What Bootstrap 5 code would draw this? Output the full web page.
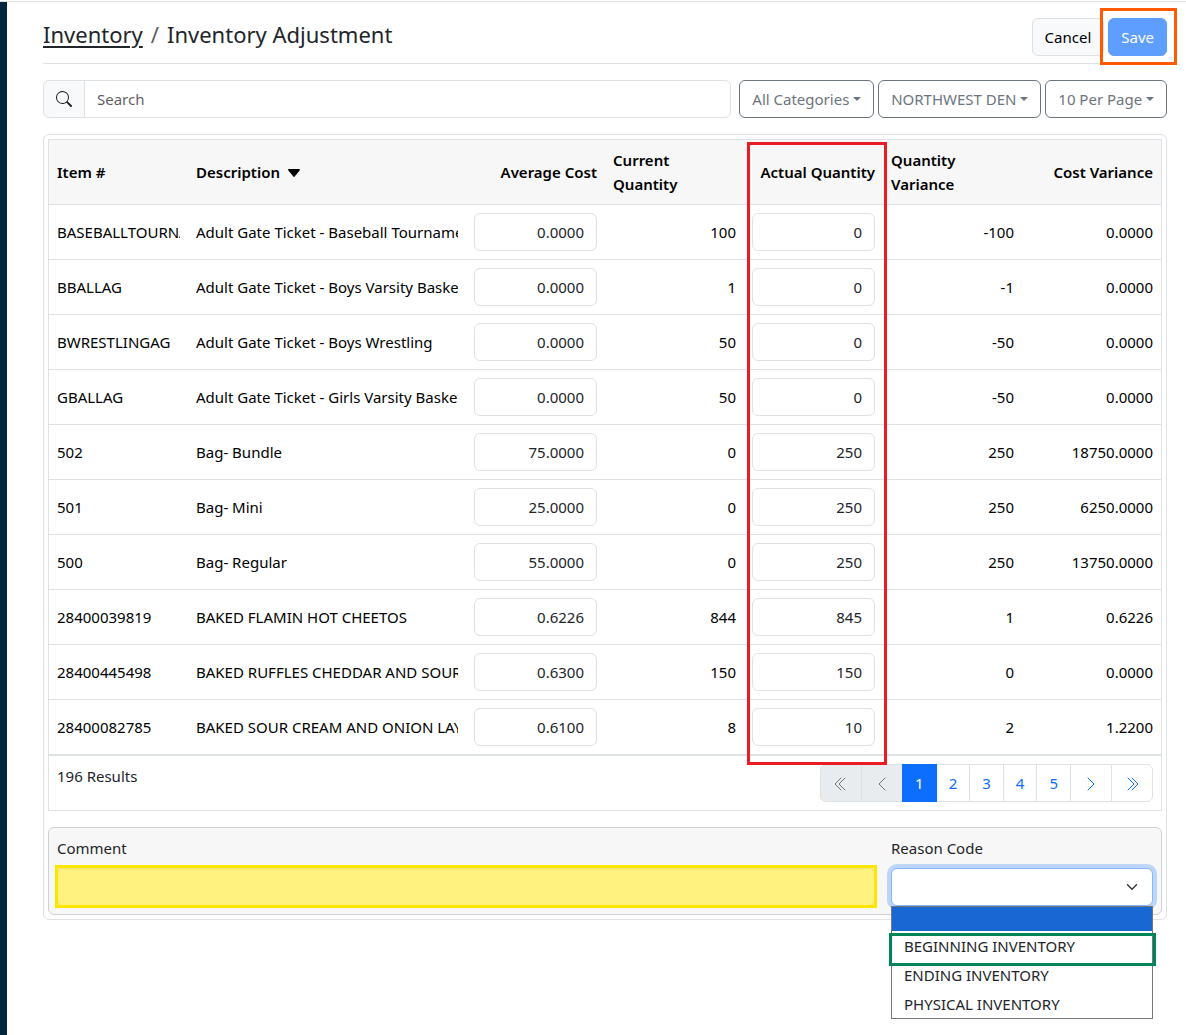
<!DOCTYPE html>
<html lang="en">
<head>
<meta charset="utf-8">
<meta name="viewport" content="width=device-width, initial-scale=1">
<title>Inventory Adjustment</title>
<link href="https://cdn.jsdelivr.net/npm/bootstrap@5.3.0/dist/css/bootstrap.min.css" rel="stylesheet">
<style>
  body { font-family: "Noto Sans", "Open Sans", sans-serif; font-size: 15px; line-height: 24px; }
  .btn, .form-control, .form-select, .input-group-text, .page-link { font-size: 15px; line-height: 24px; }
  .top-rule { height: 2px; border-bottom: 1px solid #dee2e6; }
  .side-strip { width: 7px; background: #002639; }
  .page-body { padding: 16px 19px 16px 36px; min-width: 0; }
  .title-bar { padding-bottom: 7px; }
  .crumbs { font-size: 22px; line-height: 32px; }
  .crumbs a { color: #212529; text-underline-offset: 3px; }
  .btn-cancel { --bs-btn-border-color: #dee2e6; }
  .btn-save { --bs-btn-disabled-bg: #5e9eff; --bs-btn-disabled-border-color: #5e9eff; --bs-btn-disabled-opacity: 1; }
  .form-control, .input-group-text { border-color: #dee2e6; }
  .search-addon { background: #f8f9fa; }
  .frame { padding: 4px; }
  .items { table-layout: fixed; color: #000; --bs-table-color: #000; }
  .items th { font-weight: 600; vertical-align: middle; background: #f7f7f7; }
  .items td { vertical-align: middle; }
  .pagination { --bs-pagination-padding-x: 12px; --bs-pagination-font-size: 15px; --bs-pagination-color: #0d6efd; --bs-pagination-disabled-color: #6c757d; --bs-pagination-disabled-bg: #e9ecef; }
  .adjust-panel { background: #f7f7f7; border: 1px solid #d0d1d2; border-radius: 6px; }
  /* callout frames laid over the controls they point at */
  .callout { position: absolute; pointer-events: none; z-index: 5; border: 3px solid; }
  .callout-save { inset: -10px -10px -9px -8px; border-color: #ff5a00; }
  .callout-column { left: calc(62.5% + 3px); width: calc(12.5% + 1px); top: 2px; bottom: 45px; border-color: #e81c22; }
  .callout-comment { inset: -3px -2px -2px -2px; border-color: #ffe600; background: rgba(255, 230, 0, .5); }
  .callout-option { inset: 1px -4px -5px -3px; border-color: #008558; }
  .reason-select, .reason-select:focus { border-color: #86b7fe; box-shadow: 0 0 0 4px rgba(13, 110, 253, .25); }
  .option-list { position: absolute; top: 38px; left: 0; right: 0; z-index: 3; background: #fff; border: 1px solid #767676; color: #212529; }
  .option-list li { position: relative; height: 29px; padding-left: 12px; line-height: 28px; }
  .option-list .picked { height: 25px; border-bottom: 1px solid #fff; background: #1967d2; background-clip: padding-box; }
  .option-list li:last-child { height: 28px; }
</style>
</head>
<body class="d-flex flex-column min-vh-100">
<div class="top-rule"></div>
<div class="d-flex flex-grow-1">
  <div class="side-strip flex-shrink-0"></div>
  <main class="page-body flex-grow-1">
    <header class="title-bar d-flex justify-content-between align-items-start border-bottom mb-3">
      <nav aria-label="breadcrumb">
        <ol class="breadcrumb crumbs mb-0">
          <li class="breadcrumb-item"><a href="#">Inventory</a></li>
          <li class="breadcrumb-item text-body" aria-current="page">Inventory Adjustment</li>
        </ol>
      </nav>
      <div class="d-flex gap-1">
        <button type="button" class="btn btn-light btn-cancel">Cancel</button>
        <div class="position-relative">
          <button type="button" class="btn btn-primary btn-save" disabled>Save</button>
          <div class="callout callout-save"></div>
        </div>
      </div>
    </header>

    <div class="d-flex gap-1 mb-3">
      <div class="input-group me-1 flex-grow-1 w-auto">
        <label class="input-group-text search-addon" for="search" aria-label="Search">
          <svg width="16" height="16" fill="currentColor" viewBox="0 0 16 16"><path d="M11.742 10.344a6.500 6.500 0 1 0-1.397 1.398h-.001c.030.040.062.078.098.115l3.850 3.850a1 1 0 0 0 1.415-1.414l-3.850-3.850a1.007 1.007 0 0 0-.115-.100zM12 6.500a5.500 5.500 0 1 1-11 0 5.500 5.500 0 0 1 11 0z"/></svg>
        </label>
        <input type="text" class="form-control" id="search" placeholder="Search">
      </div>
      <button type="button" class="btn btn-outline-secondary dropdown-toggle text-nowrap">All Categories</button>
      <button type="button" class="btn btn-outline-secondary dropdown-toggle text-nowrap">NORTHWEST DEN</button>
      <button type="button" class="btn btn-outline-secondary dropdown-toggle text-nowrap">10 Per Page</button>
    </div>

    <section class="frame border rounded">
      <div class="position-relative border mb-3">
        <table class="table items mb-0">
          <colgroup><col style="width:12.5%"><col style="width:25%"><col style="width:12.5%"><col style="width:12.5%"><col style="width:12.5%"><col style="width:12.5%"><col style="width:12.5%"></colgroup>
          <thead>
            <tr>
              <th scope="col">Item #</th>
              <th scope="col">Description <svg class="ms-1" width="12" height="10" viewBox="0 0 12 10"><path d="M.8 0h10.400c.7 0 1 .7.600 1.200L6.700 7.500a.9.900 0 0 1-1.400 0L.2 1.200C-.2.700.1 0 .8 0z"/></svg></th>
              <th scope="col" class="text-end text-nowrap">Average Cost</th>
              <th scope="col">Current Quantity</th>
              <th scope="col" class="text-end text-nowrap">Actual Quantity</th>
              <th scope="col">Quantity Variance</th>
              <th scope="col" class="text-end text-nowrap">Cost Variance</th>
            </tr>
          </thead>
          <tbody>
            <tr><td><span class="d-block overflow-hidden text-nowrap">BASEBALLTOURNAG</span></td><td><span class="d-block overflow-hidden text-nowrap">Adult Gate Ticket - Baseball Tournament</span></td><td><input class="form-control text-end" aria-label="Average cost" value="0.0000"></td><td class="text-end">100</td><td><input class="form-control text-end" aria-label="Actual quantity" value="0"></td><td class="text-end">-100</td><td class="text-end">0.0000</td></tr>
            <tr><td>BBALLAG</td><td><span class="d-block overflow-hidden text-nowrap">Adult Gate Ticket - Boys Varsity Basketball</span></td><td><input class="form-control text-end" aria-label="Average cost" value="0.0000"></td><td class="text-end">1</td><td><input class="form-control text-end" aria-label="Actual quantity" value="0"></td><td class="text-end">-1</td><td class="text-end">0.0000</td></tr>
            <tr><td>BWRESTLINGAG</td><td><span class="d-block overflow-hidden text-nowrap">Adult Gate Ticket - Boys Wrestling</span></td><td><input class="form-control text-end" aria-label="Average cost" value="0.0000"></td><td class="text-end">50</td><td><input class="form-control text-end" aria-label="Actual quantity" value="0"></td><td class="text-end">-50</td><td class="text-end">0.0000</td></tr>
            <tr><td>GBALLAG</td><td><span class="d-block overflow-hidden text-nowrap">Adult Gate Ticket - Girls Varsity Basketball</span></td><td><input class="form-control text-end" aria-label="Average cost" value="0.0000"></td><td class="text-end">50</td><td><input class="form-control text-end" aria-label="Actual quantity" value="0"></td><td class="text-end">-50</td><td class="text-end">0.0000</td></tr>
            <tr><td>502</td><td>Bag- Bundle</td><td><input class="form-control text-end" aria-label="Average cost" value="75.0000"></td><td class="text-end">0</td><td><input class="form-control text-end" aria-label="Actual quantity" value="250"></td><td class="text-end">250</td><td class="text-end">18750.0000</td></tr>
            <tr><td>501</td><td>Bag- Mini</td><td><input class="form-control text-end" aria-label="Average cost" value="25.0000"></td><td class="text-end">0</td><td><input class="form-control text-end" aria-label="Actual quantity" value="250"></td><td class="text-end">250</td><td class="text-end">6250.0000</td></tr>
            <tr><td>500</td><td>Bag- Regular</td><td><input class="form-control text-end" aria-label="Average cost" value="55.0000"></td><td class="text-end">0</td><td><input class="form-control text-end" aria-label="Actual quantity" value="250"></td><td class="text-end">250</td><td class="text-end">13750.0000</td></tr>
            <tr><td>28400039819</td><td><span class="d-block overflow-hidden text-nowrap">BAKED FLAMIN HOT CHEETOS</span></td><td><input class="form-control text-end" aria-label="Average cost" value="0.6226"></td><td class="text-end">844</td><td><input class="form-control text-end" aria-label="Actual quantity" value="845"></td><td class="text-end">1</td><td class="text-end">0.6226</td></tr>
            <tr><td>28400445498</td><td><span class="d-block overflow-hidden text-nowrap">BAKED RUFFLES CHEDDAR AND SOUR CREAM</span></td><td><input class="form-control text-end" aria-label="Average cost" value="0.6300"></td><td class="text-end">150</td><td><input class="form-control text-end" aria-label="Actual quantity" value="150"></td><td class="text-end">0</td><td class="text-end">0.0000</td></tr>
            <tr><td>28400082785</td><td><span class="d-block overflow-hidden text-nowrap">BAKED SOUR CREAM AND ONION LAYS</span></td><td><input class="form-control text-end" aria-label="Average cost" value="0.6100"></td><td class="text-end">8</td><td><input class="form-control text-end" aria-label="Actual quantity" value="10"></td><td class="text-end">2</td><td class="text-end">1.2200</td></tr>
          </tbody>
        </table>
        <div class="d-flex justify-content-between align-items-start border-top p-2">
          <div>196 Results</div>
          <nav aria-label="Result pages">
            <ul class="pagination mb-0">
              <li class="page-item disabled"><a class="page-link" href="#" aria-label="First"><svg width="16" height="16" viewBox="0 0 16 16" fill="none" stroke="currentColor" stroke-linecap="round" stroke-linejoin="round"><path d="M8 1 2 7l6 6M12 1 6 7l6 6"/></svg></a></li>
              <li class="page-item disabled"><a class="page-link" href="#" aria-label="Previous"><svg width="16" height="16" viewBox="0 0 16 16" fill="none" stroke="currentColor" stroke-linecap="round" stroke-linejoin="round"><path d="M11 1 5 7l6 6"/></svg></a></li>
              <li class="page-item active"><a class="page-link" href="#">1</a></li>
              <li class="page-item"><a class="page-link" href="#">2</a></li>
              <li class="page-item"><a class="page-link" href="#">3</a></li>
              <li class="page-item"><a class="page-link" href="#">4</a></li>
              <li class="page-item"><a class="page-link" href="#">5</a></li>
              <li class="page-item"><a class="page-link" href="#" aria-label="Next"><svg width="16" height="16" viewBox="0 0 16 16" fill="none" stroke="currentColor" stroke-linecap="round" stroke-linejoin="round"><path d="m5 1 6 6-6 6"/></svg></a></li>
              <li class="page-item"><a class="page-link" href="#" aria-label="Last"><svg width="16" height="16" viewBox="0 0 16 16" fill="none" stroke="currentColor" stroke-linecap="round" stroke-linejoin="round"><path d="m4 1 6 6-6 6M8 1l6 6-6 6"/></svg></a></li>
            </ul>
          </nav>
        </div>
        <div class="callout callout-column"></div>
      </div>

      <div class="adjust-panel py-2">
        <div class="row gx-3 mx-0">
          <div class="col-9">
            <label class="form-label" for="comment">Comment</label>
            <div class="position-relative">
              <input type="text" class="form-control" id="comment">
              <div class="callout callout-comment"></div>
            </div>
          </div>
          <div class="col-3">
            <label class="form-label" for="reason">Reason Code</label>
            <div class="position-relative">
              <select class="form-select reason-select" id="reason"><option></option></select>
              <ul class="option-list list-unstyled mb-0">
                <li class="picked"></li>
                <li>BEGINNING INVENTORY<div class="callout callout-option"></div></li>
                <li>ENDING INVENTORY</li>
                <li>PHYSICAL INVENTORY</li>
              </ul>
            </div>
          </div>
        </div>
      </div>
    </section>
  </main>
</div>
<script src="https://cdn.jsdelivr.net/npm/bootstrap@5.3.0/dist/js/bootstrap.bundle.min.js"></script>
</body>
</html>
